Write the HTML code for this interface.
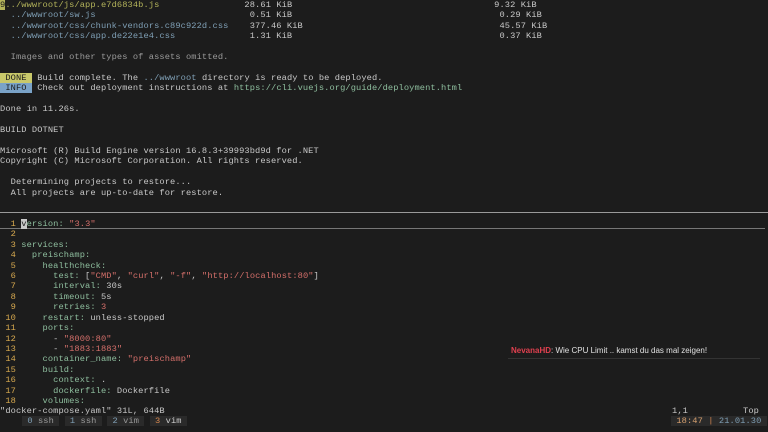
<!DOCTYPE html>
<html><head><meta charset="utf-8"><style>
html,body{margin:0;padding:0;background:#1c1c1c;width:768px;height:432px;overflow:hidden}
pre{position:absolute;left:0;top:0;margin:0;font-family:"Liberation Mono",monospace;font-size:8.7px;line-height:10.42px;color:#c8c8c8;white-space:pre;letter-spacing:0.1px}
.ab{position:absolute;margin:0;font-family:"Liberation Mono",monospace;font-size:8.7px;line-height:10.4px;white-space:pre;color:#c8c8c8;letter-spacing:0.1px}
.y{color:#b3b35a}.b{color:#7f9fb5}.g{color:#9a9a9a}
.done{background:#c8c86a;color:#1c1c1c}.info{background:#7aa3c8;color:#1c1c1c}
.n{color:#d7a94f}.k{color:#8fbf9f}.s{color:#d46f6a}
.cur{background:#c8c8c8;color:#1c1c1c}
.sep{position:absolute;left:0;width:768px;height:1px;background:#9a9a9a;top:212px}
.cl{position:absolute;left:0;width:765px;height:1px;background:#777;top:228px}
.chat{position:absolute;left:511px;top:346px;font-family:"Liberation Sans",sans-serif;font-size:8px;color:#e0e0e0}
.chat b{color:#e0404f;font-weight:bold}
.chl{position:absolute;left:508px;top:358px;width:252px;height:1px;background:#333}
.tm{background:#2a2a2a;color:#999}
</style></head><body>
<div class="sep"></div><div class="cl"></div>
<pre><span class="y"><span style="background:#b3b35a;color:#1c1c1c">9</span>../wwwroot/js/app.e7d6834b.js</span>                28.61 KiB                                      9.32 KiB
<span class="b">  ../wwwroot/sw.js</span>                             0.51 KiB                                       0.29 KiB
<span class="b">  ../wwwroot/css/chunk-vendors.c89c922d.css</span>    377.46 KiB                                     45.57 KiB
<span class="b">  ../wwwroot/css/app.de22e1e4.css</span>              1.31 KiB                                       0.37 KiB

<span class="g">  Images and other types of assets omitted.</span>

<span class="done"> DONE </span> Build complete. The <span class="b">../wwwroot</span> directory is ready to be deployed.
<span class="info"> INFO </span> Check out deployment instructions at <span style="color:#8fbf9f">https://cli.vuejs.org/guide/deployment.html</span>

Done in 11.26s.

BUILD DOTNET

Microsoft (R) Build Engine version 16.8.3+39993bd9d for .NET
Copyright (C) Microsoft Corporation. All rights reserved.

  Determining projects to restore...
  All projects are up-to-date for restore.


<span class="n">  1 </span><span class="cur">v</span><span class="k">ersion:</span> <span class="s">"3.3"</span>
<span class="n">  2 </span>
<span class="n">  3 </span><span class="k">services:</span>
<span class="n">  4 </span><span class="k">  preischamp:</span>
<span class="n">  5 </span><span class="k">    healthcheck:</span>
<span class="n">  6 </span><span class="k">      test:</span> [<span class="s">"CMD"</span>, <span class="s">"curl"</span>, <span class="s">"-f"</span>, <span class="s">"http://localhost:80"</span>]
<span class="n">  7 </span><span class="k">      interval:</span> 30s
<span class="n">  8 </span><span class="k">      timeout:</span> 5s
<span class="n">  9 </span><span class="k">      retries:</span> <span class="s">3</span>
<span class="n"> 10 </span><span class="k">    restart:</span> unless-stopped
<span class="n"> 11 </span><span class="k">    ports:</span>
<span class="n"> 12 </span>      - <span class="s">"8000:80"</span>
<span class="n"> 13 </span>      - <span class="s">"1883:1883"</span>
<span class="n"> 14 </span><span class="k">    container_name:</span> <span class="s">"preischamp"</span>
<span class="n"> 15 </span><span class="k">    build:</span>
<span class="n"> 16 </span><span class="k">      context:</span> .
<span class="n"> 17 </span><span class="k">      dockerfile:</span> Dockerfile
<span class="n"> 18 </span><span class="k">    volumes:</span>
"docker-compose.yaml" 31L, 644B</pre>
<div class="ab" style="left:672px;top:406px">1,1</div>
<div class="ab" style="left:743px;top:406px">Top</div>
<div class="ab" style="left:22px;top:416px"><span class="tm"> <span class="b">0</span> ssh </span> <span class="tm"> <span class="b">1</span> ssh </span> <span class="tm"> <span class="b">2</span> vim </span> <span class="tm"> <span style="color:#d7874f">3</span> <span style="color:#ccc">vim</span> </span></div>
<div class="ab" style="left:671px;top:416px"><span class="tm"> <span style="color:#d7a06f">18:47</span> <span style="color:#d7874f">|</span> <span class="b">21.01.30</span> </span></div>
<div class="chat"><b>NevanaHD</b>: Wie CPU Limit .. kamst du das mal zeigen!</div>
<div class="chl"></div>
</body></html>
